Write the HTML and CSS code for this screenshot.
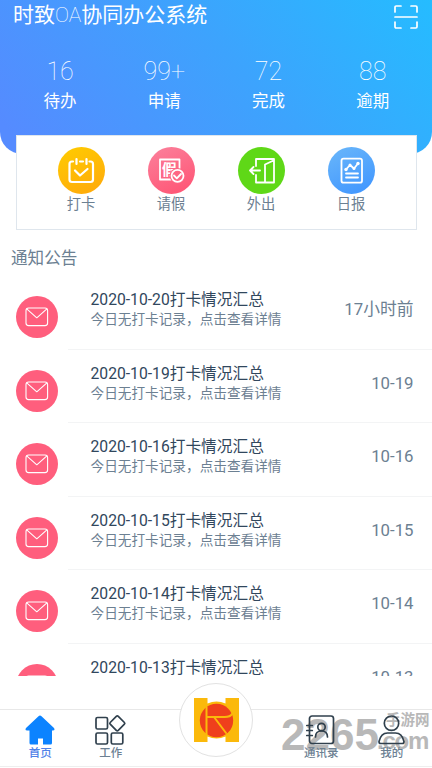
FILE: index.html
```html
<!DOCTYPE html>
<html lang="zh-CN">
<head>
<meta charset="utf-8">
<title>时致OA协同办公系统</title>
<link rel="stylesheet" href="styles.css">
</head>
<body>
<svg class="defs" width="0" height="0" aria-hidden="true">
  <symbol id="mail" viewBox="0 0 24 20"><rect x="1" y="1" width="21.6" height="17.6" rx="2.6"/><path d="M2 2.200l9.800 8.600 9.800-8.600"/></symbol>
</svg>
<header class="hero">
  <div class="topbar">
    <h1>时致<span class="thin">OA</span>协同办公系统</h1>
    <svg class="scan" viewBox="0 0 24 24"><path d="M1 7V2.200Q1 1 2.200 1H7M17 1h4.800Q23 1 23 2.200V7M23 17v4.800Q23 23 21.800 23H17M7 23H2.200Q1 23 1 21.800V17M1 12h22"/></svg>
  </div>
  <div class="stats">
    <div class="stat"><b>16</b><span>待办</span></div>
    <div class="stat"><b>99+</b><span>申请</span></div>
    <div class="stat"><b>72</b><span>完成</span></div>
    <div class="stat"><b>88</b><span>逾期</span></div>
  </div>
</header>
<section class="actions">
  <div class="action"><i class="disc yellow"><svg viewBox="0 0 47 47"><path class="thick" d="M15 14.500h-1q-2.500 0-2.500 2.500v15.500q0 2.500 2.500 2.500h18.500q2.500 0 2.500-2.500V17q0-2.500-2.500-2.500H31.500M18.500 12v5M28.500 12v5M22 14.500h3M17 23.500l5 5 7.500-6.500"/></svg></i><span>打卡</span></div>
  <div class="action"><i class="disc pink"><svg viewBox="0 0 47 47"><path d="M23 32.500H12V12.500h19.500v10"/><text x="13.800" y="28.300">假</text><circle cx="29.500" cy="28.800" r="7.800" class="hole"/><circle cx="29.500" cy="28.800" r="6"/><path d="M26 28.500l2.800 2.800 4.200-4.300"/></svg></i><span>请假</span></div>
  <div class="action"><i class="disc green"><svg viewBox="0 0 47 47"><path d="M18 19V12h18v23.500H18V28M27 35V17.500l8.500-4M12 23.500h10M15.500 20l-3.500 3.500 3.500 3.500"/></svg></i><span>外出</span></div>
  <div class="action"><i class="disc blue"><svg viewBox="0 0 47 47"><rect x="13.500" y="11.700" width="20.500" height="24" rx="2"/><path d="M18 22.500l4-4.500 4 3.500 4-5M18 26.500h12M18 30.500h12"/><g class="dots"><circle cx="18" cy="22.500" r="1.700"/><circle cx="22" cy="18" r="1.500"/><circle cx="26" cy="21.500" r="1.500"/><circle cx="30" cy="16.500" r="1.700"/></g></svg></i><span>日报</span></div>
</section>
<h2>通知公告</h2>
<main class="list">
  <article><i class="avatar"><svg><use href="#mail"/></svg></i><div class="row"><div class="text"><h3>2020-10-20打卡情况汇总</h3><p>今日无打卡记录，点击查看详情</p></div><time>17小时前</time></div></article>
  <article><i class="avatar"><svg><use href="#mail"/></svg></i><div class="row"><div class="text"><h3>2020-10-19打卡情况汇总</h3><p>今日无打卡记录，点击查看详情</p></div><time>10-19</time></div></article>
  <article><i class="avatar"><svg><use href="#mail"/></svg></i><div class="row"><div class="text"><h3>2020-10-16打卡情况汇总</h3><p>今日无打卡记录，点击查看详情</p></div><time>10-16</time></div></article>
  <article><i class="avatar"><svg><use href="#mail"/></svg></i><div class="row"><div class="text"><h3>2020-10-15打卡情况汇总</h3><p>今日无打卡记录，点击查看详情</p></div><time>10-15</time></div></article>
  <article><i class="avatar"><svg><use href="#mail"/></svg></i><div class="row"><div class="text"><h3>2020-10-14打卡情况汇总</h3><p>今日无打卡记录，点击查看详情</p></div><time>10-14</time></div></article>
  <article><i class="avatar"><svg><use href="#mail"/></svg></i><div class="row"><div class="text"><h3>2020-10-13打卡情况汇总</h3></div><time>10-13</time></div></article>
</main>
<nav class="tabs">
  <a class="tab active"><svg viewBox="0 0 30 30"><path d="M13.500 1.200q1.500-1.400 3 0L29 13q1.300 2.500-1 2.500h-1V28q0 1.500-1.500 1.500H18v-6h-5v6H6Q4.500 29.500 4.500 28V15.500H2Q-.3 15.500 1 13z"/></svg><span>首页</span></a>
  <a class="tab"><svg viewBox="0 0 30 30"><rect x="0" y="2.500" width="11.500" height="11.500" rx="1.500"/><rect x="0" y="18" width="11.500" height="11" rx="1.500"/><rect x="15.300" y="18" width="11.500" height="11" rx="1.500"/><path d="M20.300 1.300q1-1 2 0l6.100 6.200q.8.800 0 1.600l-6.100 6.200q-1 1-2 0l-6.100-6.200q-.8-.8 0-1.600z"/></svg><span>工作</span></a>
  <a class="tab center"><i class="logo"><svg viewBox="0 0 45 44"><path class="gold" d="M0 0h13.500v5.500q9-4 18 0V0H45v44H31.500v-5.500q-9 4-18 0V44H0z"/><circle cx="22.500" cy="22.500" r="16.700" fill="#ef401c"/><path d="M12.500 9v27M12.500 19h18q6 0 7.500-3M20 19l12 16"/></svg></i></a>
  <a class="tab"><svg viewBox="0 0 30 30"><rect x="3.500" y="1" width="24" height="27.500" rx="2.500"/><circle cx="15.500" cy="12" r="3.700"/><path d="M9.500 22q0-6 6-6t6 6M.8 10.500h5.500M.8 15.500h5.500M.8 20.500h5.500"/></svg><span>通讯录</span></a>
  <a class="tab"><svg viewBox="0 0 30 30"><circle cx="14.500" cy="8.200" r="7.200"/><path d="M3.500 28.500q-1.500 0-1.500-2Q4 18 10.500 18h8q6.500 0 8.500 8.500 0 2-1.500 2z"/></svg><span>我的</span></a>
</nav>
<div class="mark"><b>2265</b><div><span>手游网</span><em>.com</em></div></div>
</body>
</html>
```
FILE: styles.css
```css
* { box-sizing: border-box; }
body {
  margin: 0;
  width: 432px;
  height: 768px;
  overflow: hidden;
  position: relative;
  display: flex;
  flex-direction: column;
  background: #fff;
  color: #6c8092;
  font-family: Roboto, "Noto Sans CJK SC", sans-serif;
}
h1, h2, h3, p { margin: 0; font-weight: 400; }
i { font-style: normal; }
svg { fill: none; stroke-linecap: round; stroke-linejoin: round; overflow: visible; }
.defs { position: absolute; }
.hero {
  flex: none;
  height: 154px;
  color: #fff;
  background: linear-gradient(50deg, #558bff 5%, #3da3fd 55%, #25bcff 100%);
  border-radius: 0 0 22px 22px;
}
.topbar {
  display: flex;
  justify-content: space-between;
  height: 53px;
  padding: 0 14px 0 13px;
}
h1 { font-size: 21px; line-height: 30px; }
.thin { font-weight: 100; }
.scan { width: 24px; height: 24px; margin-top: 5px; stroke: #fff; stroke-width: 1.7; }
.stats { display: grid; grid-template-columns: repeat(4, 104.2px); padding-left: 8px; }
.stat { display: flex; flex-direction: column; align-items: center; }
.stat b { font-size: 25px; line-height: 38px; font-weight: 100; }
.stat span { font-size: 16.5px; line-height: 22px; }
.actions {
  flex: none;
  margin: -19px 15.500px 0;
  height: 95px;
  border: 1px solid #dfe6ed;
  background: #fff;
  display: grid;
  grid-template-columns: repeat(4, 90px);
  padding: 11px 0 0 19.500px;
}
.action { display: flex; flex-direction: column; align-items: center; font-size: 14.3px; line-height: 21px; }
.disc { width: 47px; height: 47px; border-radius: 50%; }
.disc svg { display: block; width: 47px; height: 47px; stroke: #fff; stroke-width: 1.8; }
.disc .thick { stroke-width: 2.2; }
.disc text { font-size: 15px; font-weight: 700; fill: #fff; stroke: none; }
.disc .hole { fill: #fe6683; stroke: none; }
.disc .dots { fill: #fff; stroke: none; }
.yellow { background: linear-gradient(155deg, #fc0, #ffa80c); }
.pink { background: linear-gradient(155deg, #fb819c, #ff5272); }
.green { background: #5fd817; }
.blue { background: linear-gradient(155deg, #6ab7fa, #3e94ff); }
h2 { flex: none; font-size: 16.6px; line-height: 24px; height: 46px; padding: 17px 0 0 11px; }
.list { flex: none; height: 399.500px; overflow: hidden; }
article { display: flex; height: 73.500px; padding-left: 16px; }
.avatar {
  flex: none;
  width: 42px;
  height: 42px;
  margin-top: 20px;
  border-radius: 50%;
  background: #ff5e7d;
  display: flex;
  align-items: center;
  justify-content: center;
}
.avatar svg { width: 24px; height: 20px; stroke: #fff; stroke-width: 1.1; }
.row {
  flex: 1;
  margin-left: 10px;
  padding: 14px 18.500px 0 22.500px;
  border-bottom: 1px solid #f3f4f5;
  display: flex;
  justify-content: space-between;
}
h3 { font-size: 15.700px; line-height: 20px; color: #31475d; }
p { font-size: 13.650px; line-height: 20px; margin-top: -1px; }
time { font-size: 16.800px; line-height: 20px; margin-top: 9px; }
.tabs {
  flex: none;
  height: 58px;
  margin-top: 33.500px;
  border-top: 1px solid #e8e8e8;
  border-bottom: 1px solid #eee;
  display: grid;
  grid-template-columns: 70.500px 70.500px 140px 70.500px 70.500px;
  justify-content: center;
}
.tab { display: flex; flex-direction: column; align-items: center; padding-top: 5px; font-size: 11.500px; font-weight: 500; line-height: 17px; }
.tab svg { width: 30px; height: 30px; stroke: #30404d; stroke-width: 1.700; }
.tab.active { color: #5081e8; }
.tab.active svg { fill: #0c83ff; stroke: none; }
.tab.center { padding: 0; }
.logo {
  flex: none;
  width: 74px;
  height: 74px;
  margin-top: -27px;
  border: 1px solid #e2e2e2;
  border-radius: 50%;
  background: #fff;
  display: flex;
  align-items: center;
  justify-content: center;
}
.tab .logo svg { width: 45px; height: 44px; stroke: #fbb90b; stroke-width: 2; }
.logo path.gold { fill: #fbb90b; stroke: none; }
.logo circle { stroke: none; }
.mark {
  position: absolute;
  z-index: -1;
  left: 281px;
  top: 710px;
  display: flex;
  color: #b8b8b8;
  font-family: "Liberation Sans", "Noto Sans CJK SC", sans-serif;
  font-weight: 700;
}
.mark b { font-size: 44px; line-height: 50px; width: 96px; }
.mark div { display: flex; flex-direction: column; }
.mark span { font-size: 14.500px; line-height: 21px; padding-left: 9px; }
.mark em { font-style: normal; font-size: 24px; line-height: 20px; letter-spacing: -1.200px; }
```
